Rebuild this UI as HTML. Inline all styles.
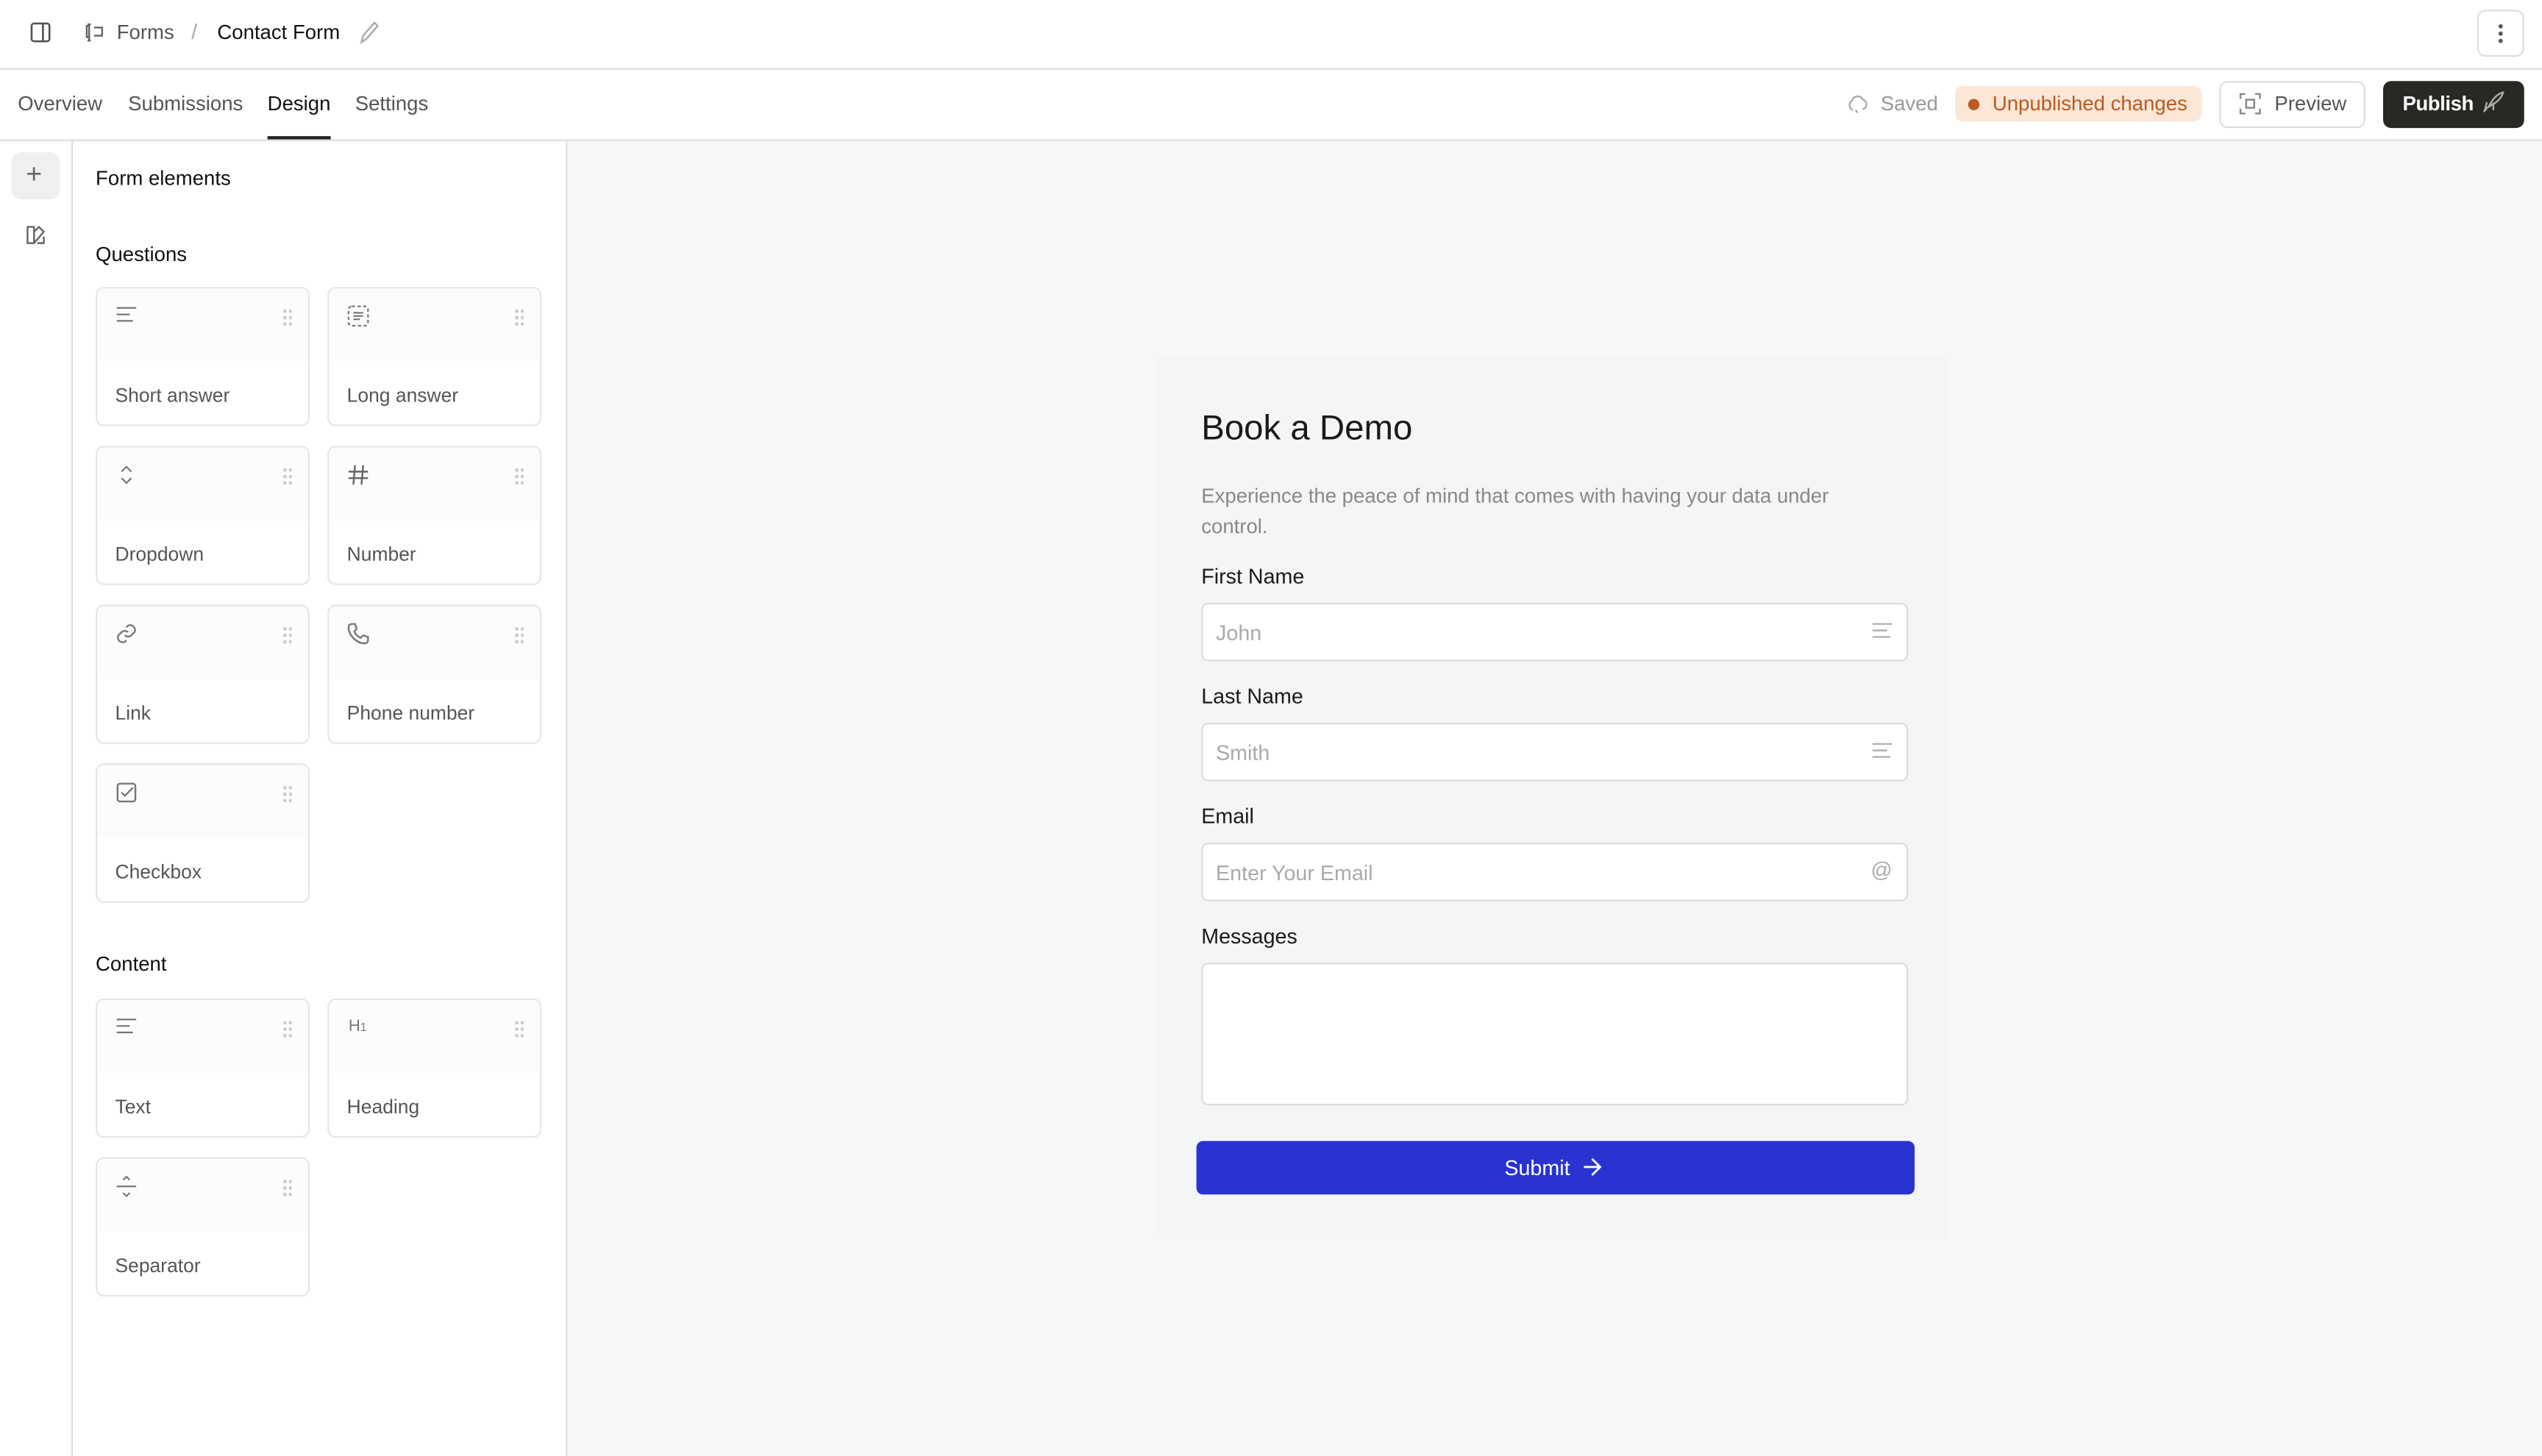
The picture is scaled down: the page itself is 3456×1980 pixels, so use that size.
<!DOCTYPE html>
<html><head><meta charset="utf-8"><style>
*{box-sizing:border-box;margin:0;padding:0}
html,body{width:3456px;height:1980px;overflow:hidden;background:#fff}
#w{width:1568px;height:899px;transform:scale(2.20408);transform-origin:0 0;position:relative;font-family:"Liberation Sans",sans-serif;color:#1a1a1a;background:#fff}
.a{position:absolute}
.card{position:absolute;width:132px;height:86px;border:1px solid #e6e6e6;border-radius:5px;background:linear-gradient(#fcfcfc 0,#fcfcfc 45px,#fff 45px)}
.card .lbl{position:absolute;left:11px;top:59px;font-size:12px;color:#555}
.card .ic{position:absolute;left:11px;top:10px;width:14px;height:14px}
.card .dr{position:absolute;right:10px;top:12px;width:6px;height:11px;background-image:radial-gradient(circle,#ccc 1px,transparent 1.2px);background-size:3.5px 4px}
.inp{position:absolute;left:741px;width:436px;height:36px;border:1px solid #dcdcdc;border-radius:4px;background:#fff;font-size:13px;color:#aaa;padding:10px 8px}
.lab{position:absolute;left:741px;font-size:13px;color:#1a1a1a}
</style></head><body><div id="w">
<svg class="a" style="left:18px;top:13px" width="14" height="14" viewBox="0 0 14 14" fill="none" stroke="#555" stroke-width="1.2"><rect x="1.5" y="1.5" width="11" height="11" rx="1.5"/><line x1="8.5" y1="1.5" x2="8.5" y2="12.5"/></svg>
<svg class="a" style="left:51px;top:13px" width="16" height="14" viewBox="0 0 16 14" fill="none" stroke="#666" stroke-width="1.1"><path d="M4 3H2.5v7H4M4 2v10M3 2h2M3 12h2M7 4h5v5H7"/></svg>
<div class="a" style="left:72px;top:13px;font-size:12.5px;color:#555">Forms</div>
<div class="a" style="left:118px;top:12px;font-size:13px;color:#aaa">/</div>
<div class="a" style="left:134px;top:13px;font-size:12.5px;color:#111">Contact Form</div>
<svg class="a" style="left:221px;top:12px" width="14" height="16" viewBox="0 0 14 16" fill="none" stroke="#aaa" stroke-width="1.1"><path d="M2 14l1-4 7-8 2 2-7 8z"/></svg>
<div class="a" style="left:1528px;top:6px;width:29px;height:29px;border:1px solid #ddd;border-radius:5px"></div>
<div class="a" style="left:1541px;top:14px;width:3px;height:13px;background-image:radial-gradient(circle,#555 1.2px,transparent 1.4px);background-size:3px 4.5px"></div>
<div class="a" style="left:0;top:42px;width:1568px;height:1px;background:#ddd"></div>
<div class="a" style="left:11px;top:57px;font-size:12.5px;color:#555">Overview</div>
<div class="a" style="left:79px;top:57px;font-size:12.5px;color:#555">Submissions</div>
<div class="a" style="left:165px;top:57px;font-size:12.5px;color:#111">Design</div>
<div class="a" style="left:165px;top:84px;width:39px;height:2px;background:#222"></div>
<div class="a" style="left:219px;top:57px;font-size:12.5px;color:#555">Settings</div>
<svg class="a" style="left:1139px;top:57px" width="14" height="14" viewBox="0 0 14 14" fill="none" stroke="#aaa" stroke-width="1.1"><path d="M4 11C1.5 10 1 6.5 3.5 5 4 2 9 1.5 10 4.5 13 5 13 9.5 10 10.5M5.5 11l1.5 1.5"/></svg>
<div class="a" style="left:1160px;top:57px;font-size:12.5px;color:#999">Saved</div>
<div class="a" style="left:1206px;top:53px;width:152px;height:22px;border-radius:5px;background:#fce6d6"></div>
<div class="a" style="left:1214px;top:61px;width:7px;height:7px;border-radius:50%;background:#b95b22"></div>
<div class="a" style="left:1229px;top:57px;font-size:12.5px;color:#b95b22">Unpublished changes</div>
<div class="a" style="left:1369px;top:50px;width:90px;height:29px;border:1px solid #ddd;border-radius:5px;background:#fff"></div>
<svg class="a" style="left:1381px;top:57px" width="14" height="14" viewBox="0 0 14 14" fill="none" stroke="#888" stroke-width="1.1"><path d="M1 4V1h3M10 1h3v3M13 10v3h-3M4 13H1v-3"/><rect x="4.5" y="4.5" width="5" height="5"/></svg>
<div class="a" style="left:1403px;top:57px;font-size:12.5px;color:#555">Preview</div>
<div class="a" style="left:1470px;top:50px;width:87px;height:29px;border-radius:5px;background:#2a2825"></div>
<div class="a" style="left:1482px;top:57px;font-size:12.5px;color:#fff;font-weight:600;letter-spacing:-0.2px">Publish</div>
<svg class="a" style="left:1530px;top:56px" width="15" height="15" viewBox="0 0 15 15" fill="none" stroke="#aaa" stroke-width="1.1"><path d="M5 10C7 6 10 2 14 1c-1 4-5 7-9 9zM5 10l-2 1 1-4M5 10l3-2v4M2 13l2-2"/></svg>
<div class="a" style="left:0;top:86px;width:1568px;height:1px;background:#ddd"></div>
<div class="a" style="left:44px;top:87px;width:1px;height:812px;background:#ddd"></div>
<div class="a" style="left:7px;top:94px;width:30px;height:29px;border-radius:6px;background:#efefef"></div>
<div class="a" style="left:16px;top:101px;font-size:17px;color:#666;line-height:14px">+</div>
<svg class="a" style="left:15px;top:138px" width="14" height="14" viewBox="0 0 14 14" fill="none" stroke="#666" stroke-width="1.1"><path d="M2 2h4v10H2zM6 5l3-3 3 3-6 7M8 12h4V8"/></svg>
<div class="a" style="left:349px;top:87px;width:1px;height:812px;background:#ddd"></div>
<div class="a" style="left:59px;top:103px;font-size:12.5px;color:#111">Form elements</div>
<div class="a" style="left:59px;top:150px;font-size:12.5px;color:#111">Questions</div>
<div class="card" style="left:59px;top:177px"><svg class="ic" viewBox="0 0 14 14" stroke="#777" stroke-width="1"><path d="M1 2h12M1 6h8M1 10h10"/></svg><div class="dr"></div><div class="lbl">Short answer</div></div>
<div class="card" style="left:202px;top:177px"><svg class="ic" viewBox="0 0 14 14" fill="none" stroke="#777" stroke-width="1"><rect x="1" y="1" width="12" height="12" rx="2" stroke-dasharray="2 1.5"/><path d="M4 5h6M4 7h6M4 9h4"/></svg><div class="dr"></div><div class="lbl">Long answer</div></div>
<div class="card" style="left:59px;top:275px"><svg class="ic" viewBox="0 0 14 14" fill="none" stroke="#777" stroke-width="1"><path d="M4 5l3-3 3 3M4 9l3 3 3-3"/></svg><div class="dr"></div><div class="lbl">Dropdown</div></div>
<div class="card" style="left:202px;top:275px"><svg class="ic" viewBox="0 0 14 14" fill="none" stroke="#666" stroke-width="1.1"><path d="M5 1L4 13M10 1L9 13M1 5h12M1 9h12"/></svg><div class="dr"></div><div class="lbl">Number</div></div>
<div class="card" style="left:59px;top:373px"><svg class="ic" viewBox="0 0 14 14" fill="none" stroke="#777" stroke-width="1.1"><path d="M6 8a3 3 0 0 0 4 0l2-2a3 3 0 0 0-4-4L7 3M8 6a3 3 0 0 0-4 0L2 8a3 3 0 0 0 4 4l1-1"/></svg><div class="dr"></div><div class="lbl">Link</div></div>
<div class="card" style="left:202px;top:373px"><svg class="ic" viewBox="0 0 14 14" fill="none" stroke="#777" stroke-width="1.1"><path d="M3 1h2l1 3-1.5 1.5a7 7 0 0 0 4 4L10 8l3 1v2a2 2 0 0 1-2 2C6 13 1 8 1 3a2 2 0 0 1 2-2z"/></svg><div class="dr"></div><div class="lbl">Phone number</div></div>
<div class="card" style="left:59px;top:471px"><svg class="ic" viewBox="0 0 14 14" fill="none" stroke="#777" stroke-width="1.1"><rect x="1.5" y="1.5" width="11" height="11" rx="1.5"/><path d="M4 7l2 2 5-5"/></svg><div class="dr"></div><div class="lbl">Checkbox</div></div>
<div class="a" style="left:59px;top:588px;font-size:12.5px;color:#111">Content</div>
<div class="card" style="left:59px;top:616px"><svg class="ic" viewBox="0 0 14 14" stroke="#777" stroke-width="1"><path d="M1 2h12M1 6h8M1 10h10"/></svg><div class="dr"></div><div class="lbl">Text</div></div>
<div class="card" style="left:202px;top:616px"><div class="a" style="left:12px;top:11px;font-size:10px;color:#777">H<span style="font-size:7px">1</span></div><div class="dr"></div><div class="lbl">Heading</div></div>
<div class="card" style="left:59px;top:714px"><svg class="ic" viewBox="0 0 14 14" fill="none" stroke="#777" stroke-width="1"><path d="M1 7h12M5 3l2-2 2 2M5 11l2 2 2-2"/></svg><div class="dr"></div><div class="lbl">Separator</div></div>
<div class="a" style="left:350px;top:87px;width:1218px;height:812px;background:#f7f7f8"></div>
<div class="a" style="left:714px;top:220px;width:488px;height:545px;background:#f4f5f7;border-radius:4px"></div>
<div class="a" style="left:741px;top:252px;font-size:21.5px;color:#1a1a1a">Book a Demo</div>
<div class="a" style="left:741px;top:297px;width:420px;font-size:12.5px;line-height:19px;color:#888">Experience the peace of mind that comes with having your data under control.</div>
<div class="lab" style="top:348px">First Name</div>
<div class="inp" style="top:372px">John</div>
<svg class="a" style="left:1155px;top:384px" width="12" height="11" viewBox="0 0 12 11" stroke="#aaa" stroke-width="1"><path d="M0 1h12M0 5h9M0 9h11"/></svg>
<div class="lab" style="top:422px">Last Name</div>
<div class="inp" style="top:446px">Smith</div>
<svg class="a" style="left:1155px;top:458px" width="12" height="11" viewBox="0 0 12 11" stroke="#aaa" stroke-width="1"><path d="M0 1h12M0 5h9M0 9h11"/></svg>
<div class="lab" style="top:496px">Email</div>
<div class="inp" style="top:520px">Enter Your Email</div>
<div class="a" style="left:1154px;top:529px;font-size:13px;color:#aaa">@</div>
<div class="lab" style="top:570px">Messages</div>
<div class="inp" style="top:594px;height:88px"></div>
<div class="a" style="left:738px;top:704px;width:443px;height:33px;border-radius:4px;background:#2a33cf"></div>
<div class="a" style="left:928px;top:713px;font-size:13px;color:#fff">Submit</div>
<svg class="a" style="left:976px;top:714px" width="12" height="12" viewBox="0 0 12 12" fill="none" stroke="#fff" stroke-width="1.3"><path d="M1 6h10M6 1l5 5-5 5"/></svg>
</div></body></html>
